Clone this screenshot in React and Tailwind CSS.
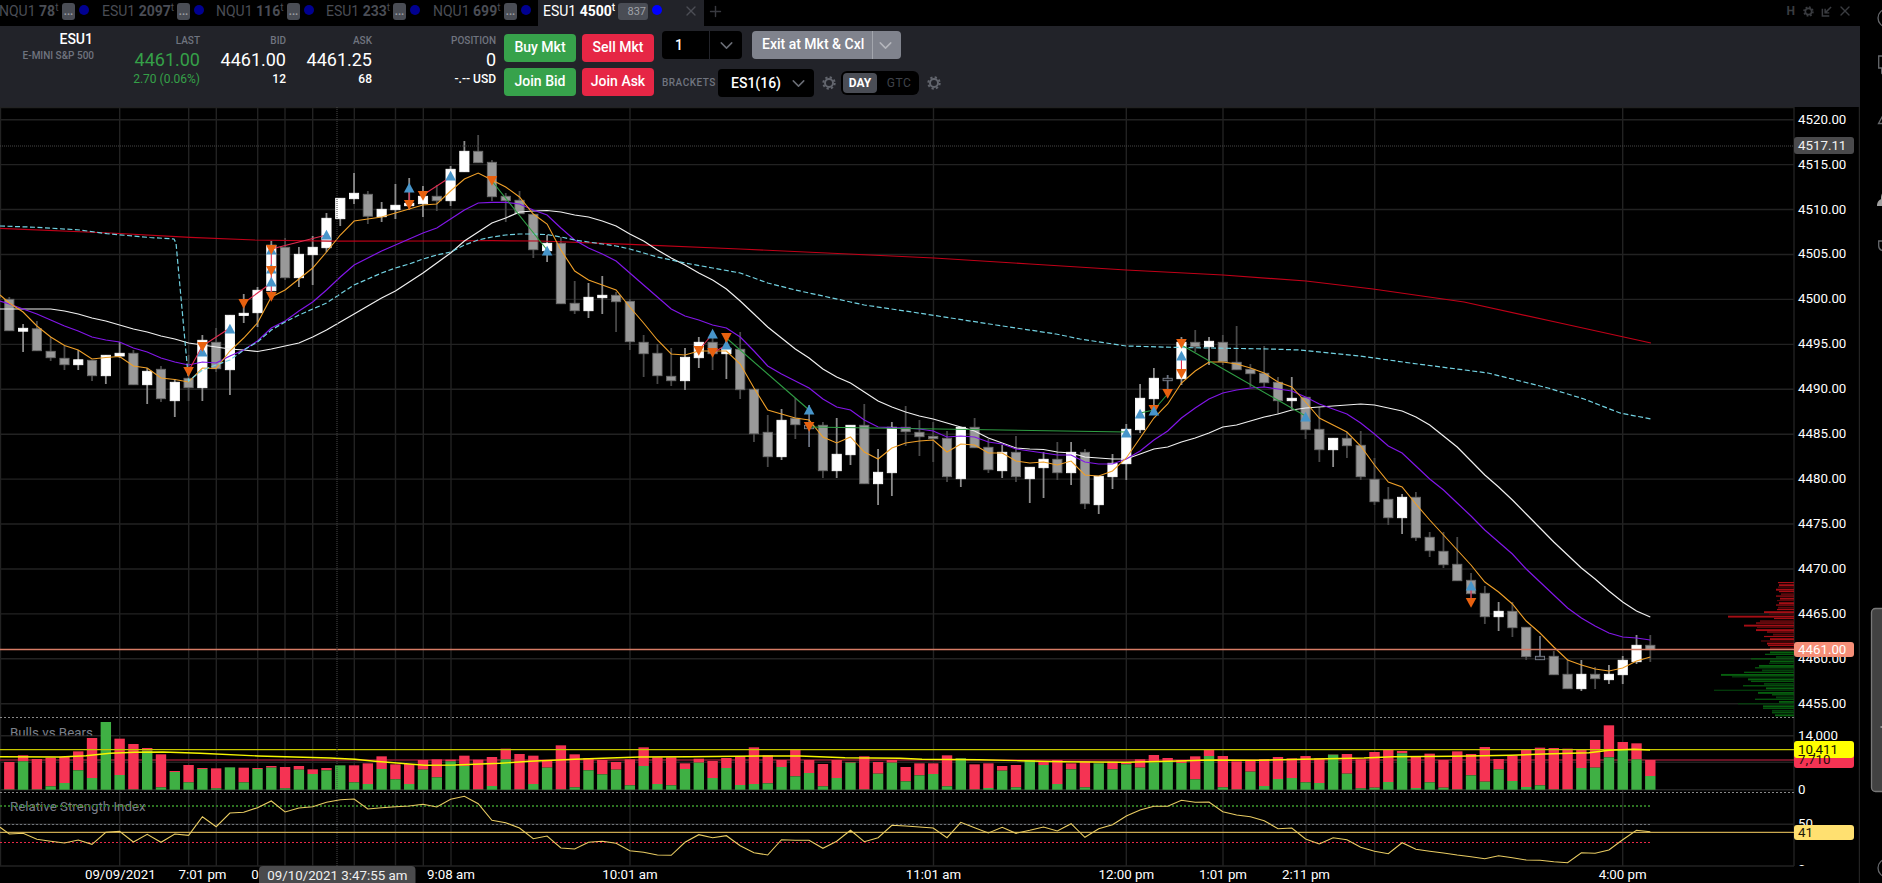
import { ChevronDown, Plus, X } from "lucide-react";

// [high, bodyTop, bodyBottom, low, kind]  w = up, g = down, d = unchanged
const CANDLES = [
  [297, 299, 331, 331, "g"], [324, 328, 331.5, 352, "w"], [321, 328.5, 351, 351, "g"], [337, 351, 358, 361, "g"],
  [346, 358, 365, 370, "g"], [350, 359.5, 365, 370, "w"], [360, 360, 376, 381, "g"], [355, 355, 376, 384, "w"],
  [342, 353, 356.3, 358, "w"], [350, 353, 385, 385, "g"], [368, 371, 385, 404, "w"], [366, 369, 399, 402, "g"],
  [379, 382, 401, 417, "w"], [355, 378, 388, 401, "g"], [335, 340, 388, 401, "w"], [328, 342, 369, 372, "g"],
  [315, 315, 370, 395, "w"], [294, 313, 315.7, 323, "w"], [287, 290, 313, 327, "w"], [241, 245, 291, 295, "w"],
  [238, 247, 278, 280, "g"], [247, 254, 278, 287, "w"], [236, 247, 255, 285, "w"], [213, 218, 248, 252, "w"],
  [198, 198, 219, 226, "w"], [173, 193, 199, 204, "w"], [191, 194, 216.5, 224, "g"], [202, 209, 217, 222, "w"],
  [184, 205, 210, 219, "w"], [178, 203, 206, 210, "w"], [186, 196, 204, 217, "w"], [185, 196, 201, 211, "g"],
  [166, 169, 201, 206, "w"], [141, 151, 172, 172, "w"], [135, 151, 163, 163, "g"], [160, 162, 197, 201, "g"],
  [193, 196, 201, 222, "g"], [191, 200, 214, 214, "g"], [214, 214, 250, 258, "g"], [235, 243, 251, 262, "w"],
  [237, 243, 304, 304, "g"], [281, 303, 311, 314, "g"], [283, 297, 311, 318, "w"], [276, 295, 298, 314, "w"],
  [292, 295, 302, 332, "g"], [299, 301, 342, 350, "g"], [335, 342, 354, 377, "g"], [344, 353, 376, 384, "g"],
  [348, 376, 381, 386, "g"], [348, 357, 381, 390, "w"], [337, 342, 358, 368, "w"], [335, 342, 354, 370, "g"],
  [333, 348, 354, 379, "w"], [332, 349, 390, 399, "g"], [389, 389, 434, 442, "g"], [415, 432, 457, 467, "g"],
  [409, 420, 457, 460, "w"], [398, 418, 425, 439, "g"], [405, 425, 429, 447, "d"], [422, 425, 471, 478, "g"],
  [418, 454, 471, 478, "w"], [425, 425, 455, 465, "w"], [404, 425, 484, 484, "g"], [449, 472, 484, 505, "w"],
  [422, 427, 473, 496, "w"], [406, 427, 432, 446, "g"], [420, 432, 437, 456, "g"], [422, 436, 439, 462, "g"],
  [431, 438, 477, 482, "g"], [427, 427, 479, 487, "w"], [418, 427, 448, 448, "g"], [439, 447, 470, 473, "g"],
  [445, 452, 471, 478, "w"], [436, 452, 477, 482, "g"], [467, 467, 479, 503, "w"], [452, 459, 468, 498, "w"],
  [442, 459, 473, 480, "g"], [442, 452, 473, 485, "w"], [449, 452, 504, 509, "g"], [476, 476, 505, 514, "w"],
  [454, 463, 477, 489, "w"], [424, 429, 464, 480, "w"], [384, 398, 430, 433, "w"], [368, 378, 399, 407, "w"],
  [375, 378, 381, 389, "d"], [337, 342, 379, 385, "w"], [330, 342, 347, 352, "g"], [337, 341, 347, 365, "w"],
  [335, 342, 362, 365, "g"], [326, 362, 370, 370, "g"], [364, 369, 374, 387, "g"], [346, 373, 383, 387, "g"],
  [377, 382, 401, 414, "g"], [377, 398, 401, 409, "w"], [397, 397, 430, 439, "g"], [407, 429, 450, 462, "g"],
  [438, 438, 450, 467, "w"], [432, 438, 446, 458, "g"], [431, 445, 477, 480, "g"], [458, 479, 502, 505, "g"],
  [487, 499, 518, 525, "g"], [494, 497, 518, 534, "w"], [492, 497, 538, 541, "g"], [532, 537, 551, 557, "g"],
  [532, 551, 565, 568, "g"], [537, 564, 581, 581, "g"], [573, 580, 594, 600, "g"], [586, 593, 617, 624, "g"],
  [602, 611, 617, 631, "w"], [602, 611, 628, 637, "g"], [627, 627, 657, 660, "g"], [636, 656, 660, 660, "d"],
  [651, 656, 675, 675, "g"], [659, 674, 689, 689, "g"], [660, 674, 689, 691, "w"], [667, 674, 679, 689, "g"],
  [665, 674, 680, 684, "w"], [656, 660, 675, 684, "w"], [635, 645, 662, 664, "w"], [635, 645, 650, 662, "g"],
];

// moving averages, one value per candle
const FAST = [
  303, 312, 326, 337, 345.5, 350, 359, 357.5, 356.5, 366, 368, 378, 379.5, 382, 368, 368.5, 351, 338, 323, 297,
  290, 279, 268, 252, 235, 221, 219, 217, 213, 209, 205, 204, 191, 179, 173, 180, 187, 197, 214, 224,
  250, 271, 280, 285, 290, 307, 323, 340, 354, 355, 351, 351, 351, 364, 388, 410, 414, 418, 420, 437,
  443, 437, 452, 459, 448, 443, 441, 440, 452, 444, 445, 453, 453, 461, 463, 462, 465, 461, 475, 476,
  471, 458, 438, 418, 404, 383, 371, 362, 362, 364, 368, 373, 382, 387, 402, 418, 425, 432, 446, 465,
  482, 487, 504, 520, 535, 550, 565, 582, 592, 604, 621, 633, 647, 660, 665, 669, 671, 668, 661, 657,
];
const MEDIUM = [
  304, 309, 314, 320, 326, 331, 337, 340, 342, 348, 352, 358, 362, 365, 362, 363, 356, 350, 341, 328,
  321, 311, 302, 290, 277, 265, 258, 251, 245, 239, 233, 228, 219, 210, 203, 202.3, 202.3, 204, 210, 215,
  228, 240, 248, 254, 261, 273, 285, 297, 309, 316, 320, 325, 328, 337, 351, 366, 374, 381, 388, 399,
  407, 410, 420, 427, 427.7, 428, 429, 431, 437, 436, 437, 442, 444, 449, 451, 453, 455, 455, 462, 464,
  464, 459, 451, 440, 431, 418, 408, 399, 393, 390, 388, 387, 389, 391, 397, 404, 409, 414, 423, 434,
  446, 453, 466, 479, 490, 503, 516, 530, 542, 554, 569, 582, 595, 608, 618, 626, 633, 637, 638, 640,
];
const SLOW = [
  309, 309, 309, 309, 311, 314, 318, 321, 325, 329, 332, 336, 339, 343, 345, 347, 349, 350, 351.5, 349,
  346, 343, 337, 330, 322, 314, 306, 298, 291, 282, 273, 263, 253, 241, 232, 223, 218, 212, 211, 210.5,
  212, 215, 217, 221, 226, 234, 241, 250, 258, 265, 273, 280, 289, 301, 314, 327, 338, 349, 358, 369,
  377, 383, 392, 401, 407, 412, 416, 419, 423, 427, 431, 438, 443, 448, 449, 449.5, 452, 453, 457, 458,
  459, 459, 454, 449, 447, 442, 438, 433, 427, 425, 421, 417, 414, 410, 408, 407, 406, 405, 404, 405,
  408, 411, 417, 425, 436, 447, 461, 475, 487, 500, 514, 528, 542, 555, 568, 579, 591, 602, 611, 617,
];
const LONG = "0,228.3 110,233 190,237.3 255,240 330,241.2 440,241 492,240.7 540,241 630,244.3 740,249 870,255 934,258 1030,264 1126,270 1223,275 1306,281 1373,289 1464,302 1560,323 1651,343";
const VWAP =
  "0,226 37,227.3 80,230 107,233.7 150,237.5 174,239 176,243 188.6,381 202.4,370 216,365 230,360 243.8,350 257.5,342 271.3,330 285,322 299,315 312.7,309 326.5,303 340.3,294 354,285 367.9,279 381.6,273 395.4,268 409.2,264 423,259 436.8,255 450.6,252 464.4,245 478.2,240 492,237 505.7,235 519.5,234 533.3,234 547.1,234.6 561,237 574.7,240 588.5,242 602.3,244 616,246 629.8,249 643.7,253 657.4,257 671.2,260 685,263 712.6,268 740.2,273 767.8,283 795.3,290 823,296 850.5,302 864.3,305 912,312 996,325 1056,334 1080,339 1126,346 1180,347.5 1270,349 1300,350 1360,356 1410,363 1488,373 1548,388 1584,399 1620,413 1651,419";

const TRADE_MARKS = [
  [13, 367, 0], [14, 347, 1], [14, 342, 0], [16, 324, 1], [17, 299, 0], [19, 245, 1], [19, 245, 0], [19, 264, 1], [19, 266, 0],
  [19, 277, 1], [19, 292, 0], [23, 230, 1], [29, 183, 1], [29, 200, 0], [30, 191, 0], [32, 171, 1], [35, 176, 0], [39, 246, 1],
  [50, 346, 0], [51, 329, 1], [51, 348, 0], [52, 340, 1], [52, 333, 0], [58, 405, 1], [58, 422, 0], [81, 428, 1], [82, 409, 1],
  [83, 405, 0], [83, 406, 1], [84, 389, 0], [85, 339, 0], [85, 351, 1], [85, 369, 0], [94, 412, 1], [106, 581, 1], [106, 598, 0],
];
const LOSS = "#e02c50";
const WIN = "#2f9e44";
const TRADE_LINES = [
  [13, 371, 14, 346, LOSS], [14, 346, 16, 328, LOSS], [17, 303, 19, 283, LOSS], [19, 250, 19, 296, LOSS], [19, 249, 23, 235, LOSS],
  [29, 188, 29, 205, LOSS], [30, 195, 32, 177, LOSS], [35, 181, 39, 250, WIN], [50, 350, 51, 334, LOSS], [51, 353, 52, 345, LOSS],
  [52, 338, 58, 410, WIN], [58, 427, 81, 432, WIN], [82, 413, 83, 410, WIN], [83, 410, 84, 394, WIN], [85, 345, 94, 416, WIN],
  [85, 355, 85, 373, LOSS], [106, 586, 106, 602, LOSS],
];

// volume bars, thirds of a pixel below y = 700: [top, split between sellers and buyers]
const VOLUME = [
  [186, 268], [166, 184], [177, 268], [173, 259], [170, 249], [154, 211], [114, 234], [66, 66], [116, 225], [132, 268],
  [144, 152], [163, 262], [213, 216], [195, 247], [204, 207], [205, 265], [202, 202], [203, 247], [204, 207], [198, 203],
  [201, 265], [198, 209], [208, 222], [204, 211], [196, 196], [196, 247], [190, 252], [169, 207], [193, 238], [192, 252],
  [180, 209], [178, 232], [179, 184], [167, 198], [179, 268], [171, 258], [146, 178], [162, 268], [167, 252], [180, 203],
  [136, 268], [163, 262], [174, 211], [180, 223], [186, 209], [178, 256], [142, 198], [172, 252], [172, 256], [190, 207],
  [176, 188], [183, 234], [174, 204], [168, 255], [142, 252], [166, 250], [180, 201], [150, 229], [180, 219], [192, 259],
  [180, 234], [186, 188], [169, 268], [186, 221], [180, 188], [201, 244], [190, 226], [190, 222], [166, 259], [174, 175],
  [193, 268], [190, 264], [198, 212], [195, 262], [180, 180], [183, 195], [180, 252], [190, 208], [184, 262], [188, 190],
  [185, 208], [186, 193], [178, 203], [165, 187], [174, 185], [180, 189], [169, 238], [149, 168], [168, 262], [184, 268],
  [181, 215], [177, 258], [171, 237], [175, 234], [168, 247], [175, 249], [163, 164], [162, 221], [178, 265], [156, 263],
  [150, 246], [153, 160], [168, 264], [161, 247], [180, 263], [154, 268], [162, 226], [141, 245], [177, 208], [167, 243],
  [147, 261], [143, 256], [144, 268], [146, 268], [149, 204], [120, 203], [76, 172], [126, 150], [130, 178], [180, 228],
];
const VOLUME_AVG =
  "0,756.7 60,757 86,755.7 110,753.3 135,752.3 163,752 200,753.3 258,756 330,758 355,759.3 375,761.3 400,763.3 425,765.3 455,765 500,763.3 530,761.3 575,759.3 610,758 640,757 690,756.7 760,756 800,756 845,757.7 900,758.3 922,759.3 979,759.7 1020,760.7 1061,761.7 1126,762.3 1179,761 1208,760 1257,760.3 1303,759.3 1364,758 1393,756.7 1454,756.3 1511,755.3 1544,754 1589,752.7 1609,750.3 1634,749.3 1650,750";

const RSI = [
  402, 400, 418, 424, 429, 420, 433, 397, 394, 426, 403, 427, 402, 406, 350, 380, 339, 337, 323, 303,
  336, 324, 320, 307, 299, 297, 327, 323, 320, 318, 313, 321, 298, 289, 311, 361, 368, 384, 416, 408,
  444, 447, 427, 424, 430, 452, 457, 465, 466, 427, 404, 413, 407, 437, 458, 465, 419, 421, 421, 445,
  424, 391, 425, 413, 376, 378, 381, 384, 413, 367, 383, 399, 382, 400, 391, 381, 393, 371, 412, 386,
  374, 348, 330, 319, 319, 301, 307, 306, 335, 345, 350, 362, 386, 384, 417, 432, 413, 419, 442, 454,
  461, 428, 448, 454, 459, 465, 470, 476, 467, 473, 480, 481, 485, 488, 458, 460, 450, 419, 391, 395,
];

// resting orders by tick, widths in px
const ASKS = [16, 15, 16, 18, 15, 13, 18, 14, 17, 15, 18, 16, 17, 30, 25, 66, 20, 34, 38, 50, 37, 38, 27, 21, 30, 24, 33, 27, 26, 24];
const BIDS = [24, 29, 18, 43, 24, 25, 35, 39, 32, 50, 73, 62, 46, 43, 30, 51, 28, 80, 36, 22, 18, 39, 15, 56, 31, 31, 22, 22, 19];

const V_GRID = [0.5, 119.7, 188.7, 216.3, 257.7, 285, 312.7, 354.3, 395.5, 423.3, 451, 630, 933.5, 1126.3, 1223, 1306, 1374.7, 1622.7];
const PRICES = [4520, 4515, 4510, 4505, 4500, 4495, 4490, 4485, 4480, 4475, 4470, 4465, 4460, 4455];
const TIMES = [
  ["09/09/2021", 120.3], ["7:01 pm", 202.5], ["9:08 am", 451], ["10:01 am", 630], ["11:01 am", 933.5],
  ["12:00 pm", 1126.3], ["1:01 pm", 1223], ["2:11 pm", 1306], ["4:00 pm", 1622.7],
];

const AXIS_X = 1794;
const cx = (i) => 9.3 + i * 13.79;
const priceY = (price) => 119.7 + (4520 - price) * 8.985;
const third = (v) => 700 + v / 3;
const linePoints = (start, values) => [`0,${start}`, ...values.map((y, i) => `${cx(i).toFixed(1)},${y}`)].join(" ");

function Candle({ i, data }) {
  const [high, top, bottom, low, kind] = data;
  const x = cx(i);
  const wick = { w: "#8c8c8c", g: "#484848", d: "#6b7280" }[kind];
  const fill = { w: "#ffffff", g: "#999999", d: "#15161a" }[kind];
  const stroke = { w: "#ffffff", g: "#6c6c6c", d: "#7b818c" }[kind];
  return (
    <g>
      <line x1={x} x2={x} y1={high} y2={low} stroke={wick} strokeWidth="1.8" />
      <rect x={x - 4.6} y={top + 0.3} width="9.2" height={bottom - top - 0.6} fill={fill} stroke={stroke} strokeWidth="0.9" />
    </g>
  );
}

function Mark({ i, y, up }) {
  const x = cx(i);
  const points = up ? `${x - 5.3},${y + 9.6} ${x + 5.3},${y + 9.6} ${x},${y - 0.2}` : `${x - 5.3},${y} ${x + 5.3},${y} ${x},${y + 9.8}`;
  return <polygon points={points} fill={up ? "#4795ca" : "#e8610f"} />;
}

function AxisTag({ y, height, fill, color, children }) {
  return (
    <g>
      <rect x={AXIS_X} y={y} width="60" height={height} rx="3" fill={fill} />
      {children && <text x="1798" y={y + height / 2 + 4.3} fill={color}>{children}</text>}
    </g>
  );
}

function Chart() {
  return (
    <svg width="1860" height="776" viewBox="0 107 1860 776" className="block bg-black font-['Roboto',sans-serif] text-[13.3px]">
      <g stroke="#222222" strokeWidth="1.4">
        {V_GRID.map((x) => <line key={x} x1={x} x2={x} y1="107" y2="866" />)}
        {PRICES.map((price) => <line key={price} x1="0" x2={AXIS_X} y1={priceY(price)} y2={priceY(price)} />)}
        {[107.5, 735.7, 762.3, 789.8, 824.3, 866].map((y) => <line key={y} x1="0" x2={AXIS_X} y1={y} y2={y} />)}
        <line x1={AXIS_X} x2={AXIS_X} y1="107" y2="866" />
        <line x1="1859.5" x2="1859.5" y1="107" y2="883" />
      </g>

      {ASKS.map((width, i) => (
        <rect key={i} x={AXIS_X - width} y={582 + i * 2.246} width={width} height={i % 2 ? 1.9 : 1.2} fill={i % 3 === 2 ? "#5c090c" : "#a50e15"} />
      ))}
      {BIDS.map((width, i) => (
        <rect key={i} x={AXIS_X - width} y={651.5 + i * 2.246} width={width} height={i % 2 ? 1.2 : 1.9} fill={i % 3 === 2 ? "#04400c" : "#07600f"} />
      ))}

      <line x1="0.3" x2="0.3" y1="270" y2="298" stroke="#484848" strokeWidth="1.4" />
      {CANDLES.map((data, i) => <Candle key={i} i={i} data={data} />)}

      <g fill="none" strokeWidth="1.1">
        <polyline points={LONG} stroke="#c00018" strokeWidth="1.2" />
        <polyline points={linePoints(309, SLOW)} stroke="#f0f0f0" strokeWidth="1.2" />
        <polyline points={linePoints(301, MEDIUM)} stroke="#8216e8" strokeWidth="1.2" />
        <polyline points={linePoints(295, FAST)} stroke="#f0a028" />
        <polyline points={VWAP} stroke="#72d2e2" strokeDasharray="5 2.5" strokeWidth="1.2" />
        {TRADE_LINES.map(([a, y1, b, y2, color], n) => <line key={n} x1={cx(a)} x2={cx(b)} y1={y1} y2={y2} stroke={color} />)}
      </g>
      {TRADE_MARKS.map(([i, y, up], n) => <Mark key={n} i={i} y={y} up={up} />)}

      <line x1="0" x2={AXIS_X} y1="649.5" y2="649.5" stroke="#d67c66" strokeWidth="1.3" />

      {/* volume */}
      <svg x="0" y="720" width="200" height="15.5">
        <text x="10" y="16.5" fill="#7c808b">Bulls vs Bears</text>
      </svg>
      <line x1="0" x2={AXIS_X} y1="760" y2="760" stroke="#8e1a30" strokeWidth="1.6" />
      {VOLUME.map(([top, split], i) => (
        <g key={i}>
          <rect x={cx(i) - 5.2} y={third(top)} width="10.4" height={(split - top) / 3} fill="#f53353" />
          <rect x={cx(i) - 5.2} y={third(split)} width="10.4" height={(268 - split) / 3 + 0.4} fill="#3fb044" />
        </g>
      ))}
      <line x1="0" x2={AXIS_X} y1="749.7" y2="749.7" stroke="#c8c800" strokeWidth="1.3" />
      <polyline points={VOLUME_AVG} fill="none" stroke="#f5f500" strokeWidth="1.4" />

      {/* relative strength */}
      <text x="10" y="811" fill="#7c808b">Relative Strength Index</text>
      <g strokeDasharray="2 2">
        <line x1="0" x2="1651" y1="806" y2="806" stroke="#2e7423" strokeWidth="1.8" />
        <line x1="0" x2="1651" y1="824.5" y2="824.5" stroke="#70757c" />
        <line x1="0" x2="1651" y1="842.5" y2="842.5" stroke="#e82846" />
        <line x1="0" x2={AXIS_X} y1="717.5" y2="717.5" stroke="#888888" />
        <line x1="0" x2={AXIS_X} y1="792.5" y2="792.5" stroke="#888888" />
      </g>
      <line x1="0" x2={AXIS_X} y1="832.4" y2="832.4" stroke="#c9a850" strokeWidth="1.3" />
      <polyline points={linePoints(827.3, RSI.map((v) => Number(third(v).toFixed(1))))} fill="none" stroke="#e8cb62" strokeWidth="1.1" />

      {/* crosshair */}
      <g stroke="#484848" strokeDasharray="1 1">
        <line x1="0" x2={AXIS_X} y1="146" y2="146" />
        <line x1="337" x2="337" y1="107" y2="866" />
      </g>

      {PRICES.map((price) => <text key={price} x="1798" y={priceY(price) + 4} fill="#ffffff">{price.toFixed(2)}</text>)}
      <AxisTag y={137} height={17} fill="#4a4a4c" color="#f0f0f0">4517.11</AxisTag>
      <AxisTag y={642} height={15} fill="#f68f78" color="#ffffff">4461.00</AxisTag>
      <text x="1798" y="739.5" fill="#ffffff">14,000</text>
      <text x="1798" y="793.5" fill="#ffffff">0</text>
      <text x="1798" y="827.5" fill="#ffffff">50</text>
      <AxisTag y={751} height={17} fill="#f53353" />
      <AxisTag y={741} height={17} fill="#ffff00" color="#111100">10,411</AxisTag>
      <text x="1798" y="763.8" fill="#2a0a10">7,710</text>
      <AxisTag y={825} height={15} fill="#ffe070" color="#1c1808">41</AxisTag>
      <svg x="1794" y="860" width="40" height="6">
        <text x="4" y="14" fill="#ffffff">0</text>
      </svg>

      <g textAnchor="middle" fill="#ffffff">
        {TIMES.map(([label, x]) => <text key={label} x={x} y="879">{label}</text>)}
        <text x="255" y="879">0</text>
        <rect x="259" y="866" width="156.5" height="20" rx="4" fill="#4a4a4c" />
        <text x="337.3" y="880" fill="#f0f0f0">09/10/2021 3:47:55 am</text>
      </g>
    </svg>
  );
}

// eight stubby teeth round an open ring
function Gear({ className }) {
  return (
    <svg className={className} viewBox="0 0 14 14" fill="none" stroke="currentColor">
      <circle cx="7" cy="7" r="4" strokeWidth="2" />
      <circle cx="7" cy="7" r="5.7" strokeWidth="2" strokeDasharray="2.238" />
    </svg>
  );
}

function Tab({ symbol, ticks, className, labelClass }) {
  return (
    <div className={`flex h-full shrink-0 items-start text-[#4a4d55] ${className}`}>
      <span className={`mt-px shrink-0 whitespace-nowrap text-sm leading-5 ${labelClass}`}>{symbol} <b className="font-bold">{ticks}</b><sup className="top-[-5px] text-[10px]">t</sup></span>
      <span className="mt-[3px] h-[17px] w-[13px] shrink-0 rounded-[3px] bg-[#4a4d55] text-center text-[11px] leading-[18px] font-bold text-[#9a9da3]">...</span>
      <i className="ml-1 mt-[5px] size-[10px] shrink-0 rounded-full bg-[#000090]" />
    </div>
  );
}

function TabBar() {
  return (
    <div className="flex h-[26px] items-start bg-black">
      <Tab symbol="NQU1" ticks="78" className="w-[102px]" labelClass="w-[62px] -ml-px mr-px" />
      <Tab symbol="ESU1" ticks="2097" className="w-[114px]" labelClass="w-[75px]" />
      <Tab symbol="NQU1" ticks="116" className="w-[110px]" labelClass="w-[71px]" />
      <Tab symbol="ESU1" ticks="233" className="w-[107px]" labelClass="w-[67px]" />
      <Tab symbol="NQU1" ticks="699" className="w-[105px]" labelClass="w-[71px]" />
      <div className="flex h-full w-[166px] items-start bg-[#222329] pl-[5px] text-white">
        <span className="mt-px w-[75px] whitespace-nowrap text-sm leading-5">ESU1 <b>4500</b><sup className="top-[-5px] text-[10px] font-medium">t</sup></span>
        <span className="mt-[3px] h-[17px] w-[30px] rounded-[3px] bg-[#4a4d55] pr-0.5 text-right text-[11px] leading-[17px] text-[#a0a3a9]">837</span>
        <i className="ml-1 mt-[5px] size-[10px] rounded-full bg-[#0000ff]" />
        <X className="ml-[21px] mt-[3px] size-4 text-[#4c4e55]" />
      </div>
      <Plus className="ml-[3px] mt-[3px] size-[17px] text-[#393a40]" />
      <div className="ml-auto mr-[7px] flex h-[22px] items-center text-[#3a3c40]">
        <span className="mr-2 text-xs leading-none font-bold">H</span>
        <Gear className="mr-[7px] size-[11px]" />
        <svg className="mr-[5px] size-[11px]" viewBox="0 0 12 12" fill="none" stroke="currentColor" strokeWidth="1.6">
          <path d="M1.5 3v8H9M11 1 4.5 7.5M4.5 3v4.5H9" />
        </svg>
        <X className="size-4" />
      </div>
    </div>
  );
}

function Quote({ label, value, note, className, tone = "text-white" }) {
  return (
    <div className={`flex flex-col items-end pt-[9px] whitespace-nowrap ${className}`}>
      <span className="text-[10px] leading-3 font-medium text-[#70747f]">{label}</span>
      <span className={`mt-0.5 text-[18px] leading-[22px] ${tone}`}>{value}</span>
      <span className={`text-xs leading-4 ${tone === "text-white" ? "font-medium" : ""} ${tone}`}>{note}</span>
    </div>
  );
}

function OrderButton({ children, className }) {
  return <button className={`h-7 w-[72px] rounded pb-0.5 text-sm leading-none font-medium text-white ${className}`}>{children}</button>;
}

function OrderBar() {
  return (
    <div className="flex h-[81px] items-start bg-[#222329]">
      <div className="flex w-[94px] flex-col items-end pt-[5px] whitespace-nowrap">
        <span className="mr-px text-sm leading-4 font-medium text-white">ESU1</span>
        <span className="mt-[3px] text-[10px] leading-3 font-medium text-[#70747f]">E-MINI S&amp;P 500</span>
      </div>
      <Quote label="LAST" value="4461.00" note="2.70 (0.06%)" tone="text-[#35a048]" className="w-[106px]" />
      <Quote label="BID" value="4461.00" note="12" className="w-[86px]" />
      <Quote label="ASK" value="4461.25" note="68" className="w-[86px]" />
      <Quote label="POSITION" value="0" note="-.-- USD" className="w-[124px]" />
      <div className="ml-2 grid grid-cols-[72px_72px] gap-1.5 pt-2">
        <OrderButton className="bg-[#37a24b]">Buy Mkt</OrderButton>
        <OrderButton className="bg-[#e62645]">Sell Mkt</OrderButton>
        <OrderButton className="bg-[#37a24b]">Join Bid</OrderButton>
        <OrderButton className="bg-[#e62645]">Join Ask</OrderButton>
      </div>
      <div className="ml-2 flex flex-col gap-2.5 pt-[5px] text-sm font-medium text-white">
        <div className="flex h-7 gap-2.5">
          <div className="flex w-20 rounded bg-black">
            <span className="w-12 border-r border-[#222329] pl-[13px] leading-7">1</span>
            <ChevronDown className="m-auto size-[21px] text-[#6a6d75]" strokeWidth={1.7} />
          </div>
          <div className="flex w-[149px] rounded bg-[#80838d]">
            <span className="w-[121px] shrink-0 border-r border-[#a3a6ad] pl-2.5 leading-[26px] whitespace-nowrap">Exit at Mkt &amp; Cxl</span>
            <ChevronDown className="my-auto ml-0.5 size-[21px] text-[#b4b6bc]" strokeWidth={1.7} />
          </div>
        </div>
        <div className="flex h-7 items-center">
          <span className="w-14 text-[10px] tracking-[0.5px] text-[#70747f]">BRACKETS</span>
          <div className="flex h-7 w-24 items-center rounded bg-black pl-[13px]">
            ES1(16)
            <ChevronDown className="ml-auto mr-[5px] size-[21px] text-[#6a6d75]" strokeWidth={1.7} />
          </div>
          <Gear className="ml-2 size-[14px] text-[#62656d]" />
          <div className="ml-[5px] flex h-6 w-[78px] items-center rounded-md bg-black p-0.5 text-xs">
            <span className="h-5 w-[34px] rounded bg-[#4a4d55] text-center leading-5 font-bold">DAY</span>
            <span className="flex-1 pl-1 text-center font-normal tracking-[0.5px] text-[#3f4249]">GTC</span>
          </div>
          <Gear className="ml-2 size-[14px] text-[#62656d]" />
        </div>
      </div>
    </div>
  );
}

// side dock, most of it runs past the window edge
function Dock() {
  return (
    <aside className="h-full w-[22px] overflow-hidden bg-black">
      <svg width="22" height="883" fill="none" stroke="#66686c" strokeWidth="1.3">
        <circle cx="27" cy="18" r="9" />
        <path d="M34 56H18.700v12h3v5l5-5" />
        <path d="M26 110 18.500 123.500H34" />
        <path d="M17 206c0-5 3-6 4-7 0-4 1-7 4-8v15z" fill="#a0a0a0" stroke="none" />
        <path d="M26 241h-7.300v5c0 4 3 5 7 5" />
        <rect x="11.500" y="608.500" width="30" height="183" rx="4" fill="#424242" stroke="#787878" />
        <path d="M20.500 727h4" stroke="#aaaaaa" />
        <circle cx="27" cy="868" r="9" />
      </svg>
    </aside>
  );
}

export default function App() {
  return (
    <div className="flex h-[883px] w-[1882px] overflow-hidden bg-black font-['Roboto',sans-serif]">
      <main className="flex w-[1860px] shrink-0 flex-col">
        <TabBar />
        <OrderBar />
        <Chart />
      </main>
      <Dock />
    </div>
  );
}
